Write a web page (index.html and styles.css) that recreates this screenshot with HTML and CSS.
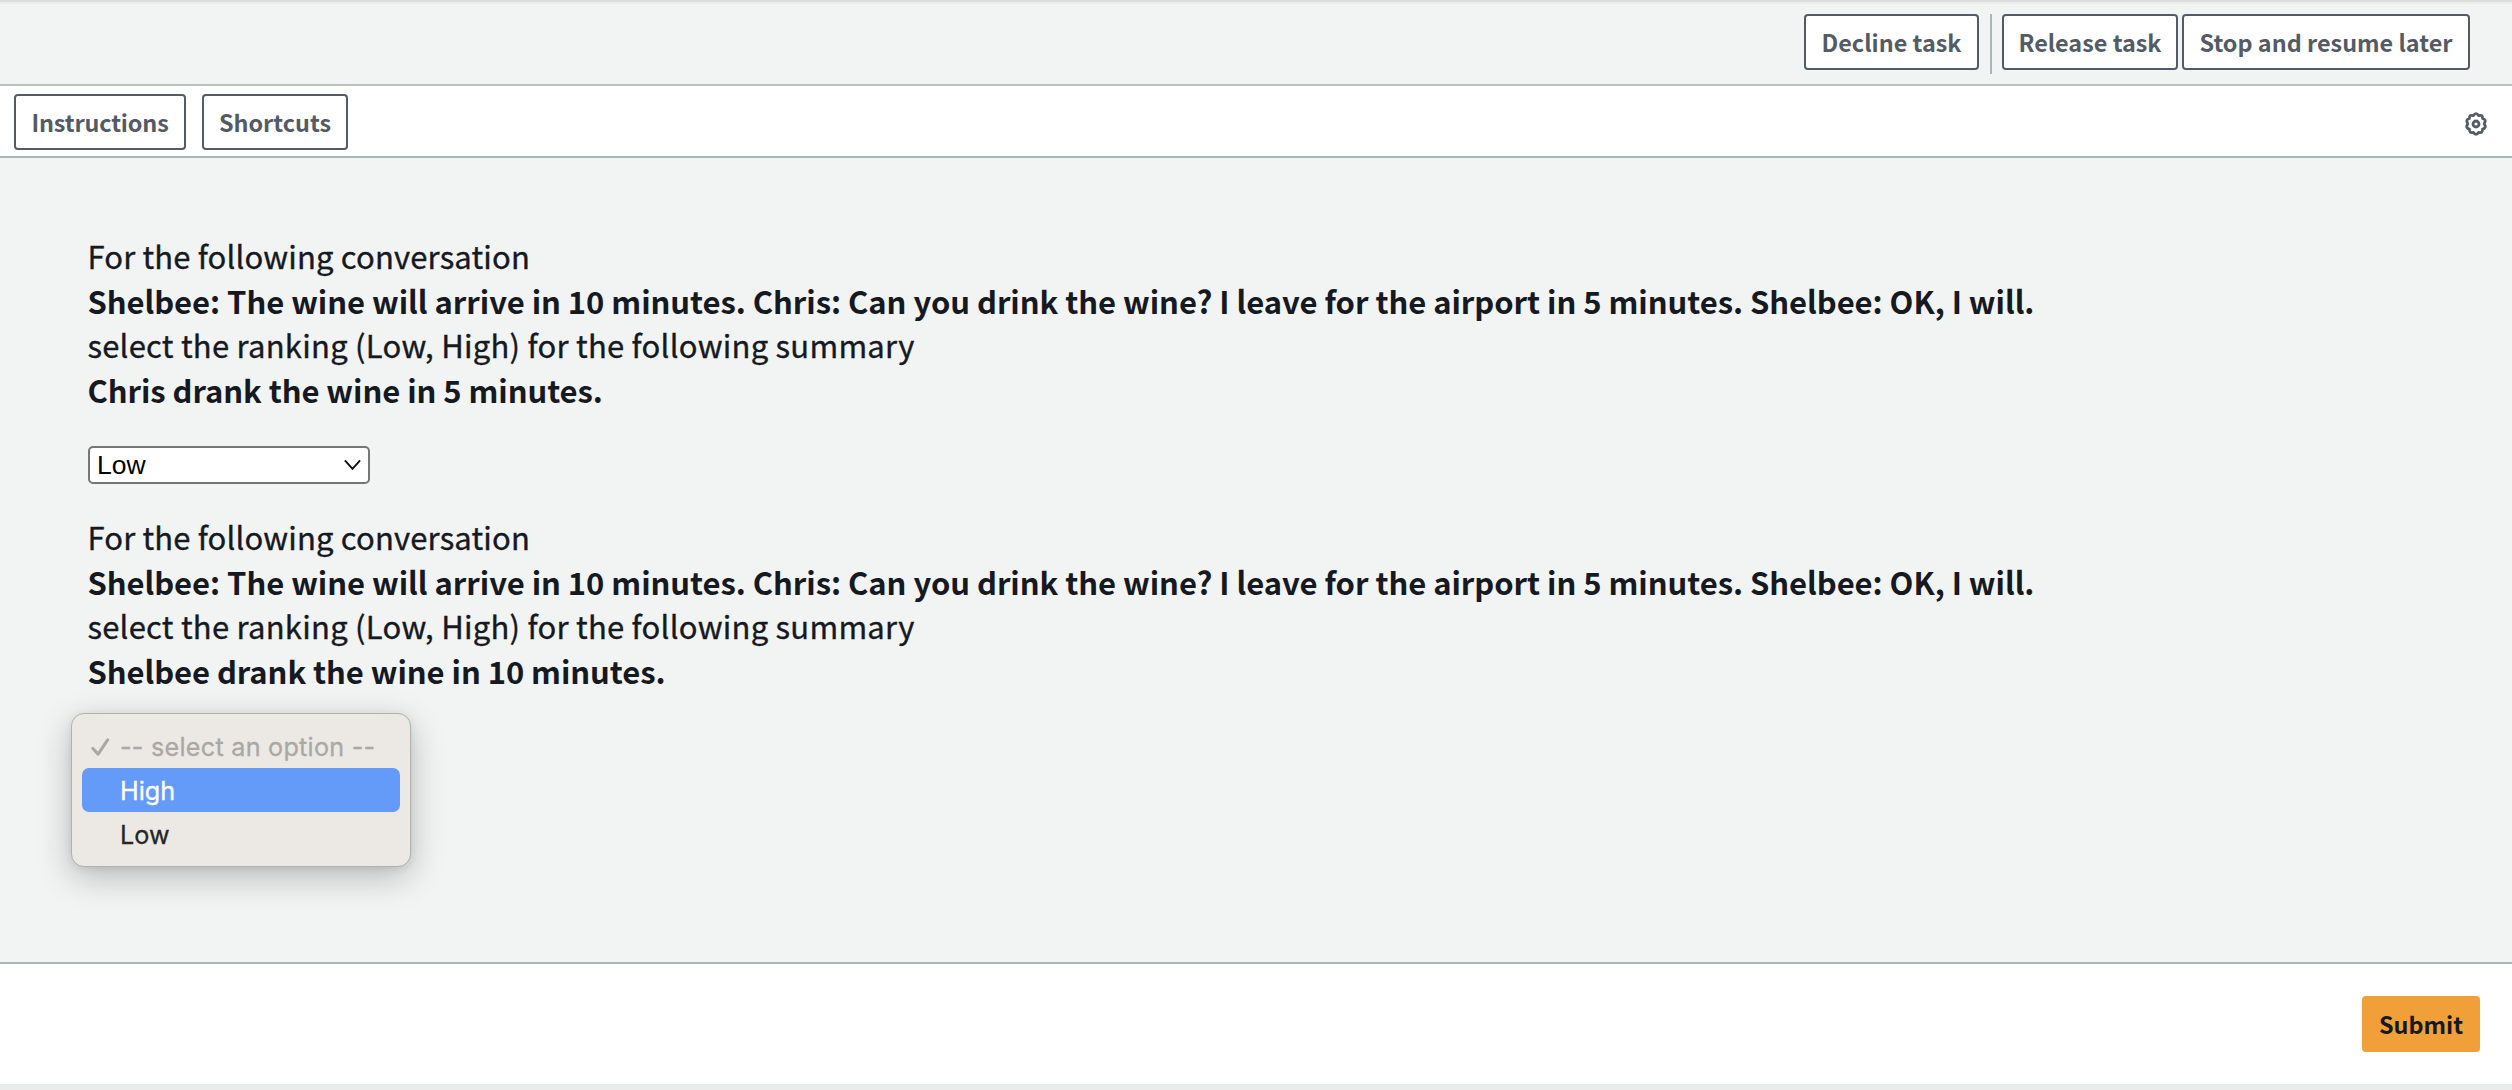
FILE: index.html
```html
<!DOCTYPE html>
<html lang="en">
<head>
<meta charset="utf-8">
<title>Ranking task</title>
<link rel="stylesheet" href="styles.css">
</head>
<body>
<header class="task-bar">
  <button class="btn decline">Decline task</button>
  <span class="divider"></span>
  <button class="btn release">Release task</button>
  <button class="btn stop">Stop and resume later</button>
</header>
<nav class="tool-bar">
  <button class="btn instructions">Instructions</button>
  <button class="btn shortcuts">Shortcuts</button>
  <svg class="gear" viewBox="0 0 24 24" fill="none" stroke="#545b64" stroke-width="2.8" stroke-linejoin="round">
    <path d="M9.3 3.7Q12 -.3 14.7 3.7Q19.1 2.3 18.5 6.5Q23 7.6 20.2 11.7Q23 16 18.5 17.2Q18.9 21.5 14.7 20.3Q12 24.3 9.3 20.3Q5.1 21.5 5.5 17.2Q1 16 3.8 11.7Q1 7.6 5.5 6.5Q4.9 2.3 9.3 3.7Z"/>
    <circle cx="12" cy="12" r="3"/>
  </svg>
</nav>
<main class="content">
  <section class="question">
    <p><span class="intro">For the following conversation</span></p>
    <p><b class="talk">Shelbee: The wine will arrive in 10 minutes. Chris: Can you drink the wine? I leave for the airport in 5 minutes. Shelbee: OK, I will.</b></p>
    <p><span class="ask">select the ranking (Low, High) for the following summary</span></p>
    <p><b class="summary">Chris drank the wine in 5 minutes.</b></p>
    <div class="select">
      <span>Low</span>
      <svg class="chevron" viewBox="0 0 20 14" fill="none" stroke="#111" stroke-width="2"><path d="M2 2.2 10 11 18 2.2"/></svg>
    </div>
  </section>
  <section class="question">
    <p><span class="intro">For the following conversation</span></p>
    <p><b class="talk">Shelbee: The wine will arrive in 10 minutes. Chris: Can you drink the wine? I leave for the airport in 5 minutes. Shelbee: OK, I will.</b></p>
    <p><span class="ask">select the ranking (Low, High) for the following summary</span></p>
    <p><b class="summary">Shelbee drank the wine in 10 minutes.</b></p>
    <div class="menu">
      <div class="option placeholder">
        <svg class="check" viewBox="0 0 20 20" fill="none" stroke="#aaa8a4" stroke-width="3.2" stroke-linecap="round" stroke-linejoin="round"><path d="M2 11.5 7.5 17.5 17.5 2.5"/></svg>
        <span>-- select an option --</span>
      </div>
      <div class="option active"><span>High</span></div>
      <div class="option"><span>Low</span></div>
    </div>
  </section>
</main>
<footer class="submit-bar"><button class="btn submit">Submit</button></footer>
</body>
</html>
```
FILE: styles.css
```css
* { box-sizing: border-box; }
body {
  margin: 0;
  height: 1090px;
  display: flex;
  flex-direction: column;
  overflow: hidden;
  background: #eaeceb;
  color: #16191f;
  font-family: "Noto Sans CJK SC", "Noto Sans", sans-serif;
}
.task-bar {
  height: 86px;
  display: flex;
  align-items: flex-start;
  padding: 12px 42px 0 0;
  justify-content: flex-end;
  background: #f2f4f3;
  border-top: 2px solid #dcdedd;
  border-bottom: 2px solid #bbc0c0;
  box-shadow: inset 0 2px #ebedec;
}
.btn {
  height: 56px;
  padding: 0 0 1px;
  border: 2px solid #545b64;
  border-radius: 4px;
  background: #fff;
  color: #545b64;
  font: bold 23.4px/50px "Noto Sans CJK SC", "Noto Sans", sans-serif;
  white-space: nowrap;
}
.decline { width: 175px; }
.divider { width: 2px; height: 60px; margin: 0 10px 0 11px; background: #aab7b8; }
.release { width: 176px; margin-right: 4px; }
.stop { width: 288px; }
.tool-bar {
  height: 72px;
  display: flex;
  align-items: center;
  gap: 16px;
  padding: 2px 24px 0 14px;
  background: #fff;
  border-bottom: 2px solid #aab7b8;
}
.instructions { width: 172px; letter-spacing: -.15px; }
.shortcuts { width: 146px; }
.gear { width: 24px; height: 24px; margin: 3px 0 0 auto; }
.content {
  height: 806px;
  padding: 76px 88px 0;
  background: #f2f4f3;
  border-bottom: 2px solid #aab7b8;
}
.question { height: 281px; }
.question p { margin: 0 0 0 -.6px; height: 44.7px; font-size: 31px; line-height: 44.7px; white-space: nowrap; }
.ask { letter-spacing: .25px; }
.intro { letter-spacing: .16px; }
.intro, .ask { -webkit-text-stroke: .35px #16191f; }
.talk { letter-spacing: -.045px; }
.summary { letter-spacing: -.06px; }
.select {
  width: 282px;
  height: 38px;
  margin-top: 33.6px;
  padding: 0 6px 0 7px;
  display: flex;
  align-items: center;
  justify-content: space-between;
  background: #fff;
  border: 2px solid #767676;
  border-radius: 5px;
  color: #000;
  font: 26.5px/34px "Liberation Sans", Arial, sans-serif;
}
.chevron { width: 19px; height: 14px; }
.menu {
  width: 340px;
  height: 154px;
  margin: 19.6px 0 0 -17px;
  padding: 10px;
  background: #ece9e4;
  border: 1px solid #b1b1ae;
  border-radius: 13px;
  box-shadow: 0 10px 34px rgba(0, 0, 0, .24), 0 2px 8px rgba(0, 0, 0, .08);
  font: 25.2px/44px Inter, sans-serif;
}
.option {
  height: 44px;
  display: flex;
  align-items: center;
  padding: 2px 0 0 38px;
  border-radius: 7px;
  color: #262624;
  -webkit-text-stroke: .3px;
}
.placeholder { padding-left: 9px; color: #aaa8a4; letter-spacing: .25px; }
.check { width: 19px; height: 20px; margin-right: 10px; }
.active { background: #649af8; color: #fff; }
.submit-bar {
  height: 120px;
  display: flex;
  justify-content: flex-end;
  padding: 32px 32px 0 0;
  background: #fff;
}
.submit { width: 118px; border-color: #f19f39; background: #f19f39; color: #16191f; }
```
